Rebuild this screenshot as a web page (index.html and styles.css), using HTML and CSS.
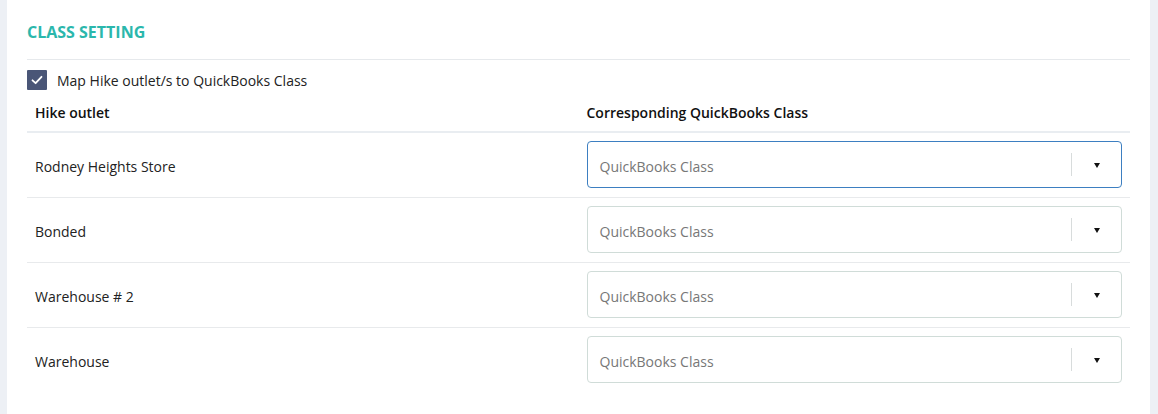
FILE: index.html
```html
<!DOCTYPE html>
<html>
<head>
<meta charset="utf-8">
<link rel="stylesheet" href="styles.css">
</head>
<body>
<div class="page">
  <div class="card">
    <h2 class="title">CLASS SETTING</h2>
    <label class="check">
      <span class="box">
        <svg width="14" height="14" viewBox="0 0 14 14"><path d="M2.5 7.3 L5.6 10.2 L11.5 3.8" fill="none" stroke="#fff" stroke-width="1.8" stroke-linecap="round" stroke-linejoin="round"/></svg>
      </span>
      <span class="check-label">Map Hike outlet/s to QuickBooks Class</span>
    </label>
    <table class="map">
      <thead>
        <tr><th>Hike outlet</th><th>Corresponding QuickBooks Class</th></tr>
      </thead>
      <tbody>
        <tr><td>Rodney Heights Store</td><td class="sel-cell"><div class="select focus"><span class="ph">QuickBooks Class</span><span class="sep"></span><span class="arrow"></span></div></td></tr>
        <tr><td>Bonded</td><td class="sel-cell"><div class="select"><span class="ph">QuickBooks Class</span><span class="sep"></span><span class="arrow"></span></div></td></tr>
        <tr><td>Warehouse # 2</td><td class="sel-cell"><div class="select"><span class="ph">QuickBooks Class</span><span class="sep"></span><span class="arrow"></span></div></td></tr>
        <tr><td>Warehouse</td><td class="sel-cell"><div class="select"><span class="ph">QuickBooks Class</span><span class="sep"></span><span class="arrow"></span></div></td></tr>
      </tbody>
    </table>
  </div>
</div>
</body>
</html>
```
FILE: styles.css
```css
html, body {
  margin: 0;
  padding: 0;
  background: #edf0f5;
  font-family: "Open Sans", "Liberation Sans", sans-serif;
  color: #222;
}
.page {
  padding: 0 8px 0 7px;
  height: 414px;
  overflow: hidden;
}
.card {
  background: #fff;
  padding: 22px 20px 20px 20px;
  height: 414px;
  box-sizing: border-box;
}
.title {
  margin: 0;
  font-size: 16px;
  font-weight: 700;
  color: #2bb7ac;
  line-height: 20px;
  padding-bottom: 17px;
  border-bottom: 1px solid #e6e9ec;
}
.check {
  display: flex;
  align-items: center;
  margin-top: 10px;
  height: 20px;
}
.box {
  width: 20px;
  height: 20px;
  background: #4a5677;
  border-radius: 1px;
  display: flex;
  align-items: center;
  justify-content: center;
}
.check-label {
  margin-left: 10px;
  font-size: 14px;
  color: #222;
}
.map {
  width: 100%;
  border-collapse: collapse;
  margin-top: 4px;
  table-layout: fixed;
}
.map th {
  text-align: left;
  font-size: 14px;
  font-weight: 600;
  color: #111;
  padding: 9px 8px 9px 8px;
  height: 30px;
  box-sizing: border-box;
  border-bottom: 2px solid #e9edf1;
}
.map td {
  font-size: 14px;
  color: #222;
  padding: 10px 8px 7px 8px;
  height: 65px;
  box-sizing: border-box;
  border-bottom: 1px solid #e8eaec;
}
.map td.sel-cell {
  padding: 8px 8px 9px 8px;
}
.map tbody tr:last-child td {
  border-bottom: none;
}
.select {
  display: flex;
  align-items: center;
  height: 47px;
  box-sizing: border-box;
  border: 1px solid #d0dcd8;
  border-radius: 4px;
  padding-left: 12px;
}
.select.focus {
  border-color: #3d7fc1;
}
.ph {
  flex: 1;
  color: #777;
  font-size: 14px;
  padding-top: 3px;
}
.sep {
  width: 1px;
  height: 23px;
  background: #d8dcdc;
}
.arrow {
  width: 0;
  height: 0;
  border-left: 3.5px solid transparent;
  border-right: 3.5px solid transparent;
  border-top: 5px solid #111;
  margin: 2px 21px 0 22px;
}
```
